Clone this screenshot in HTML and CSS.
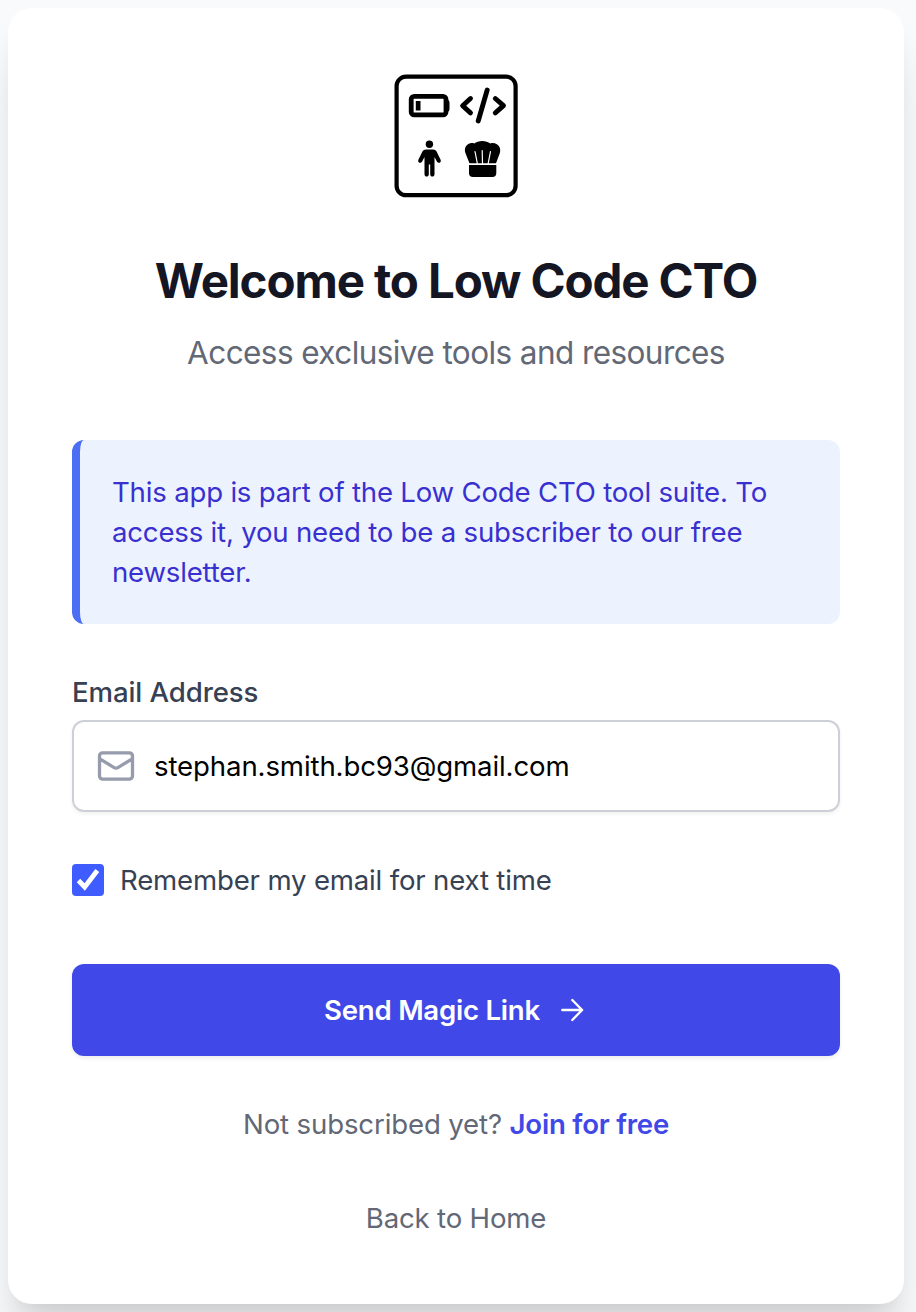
FILE: index.html
```html
<!DOCTYPE html>
<html lang="en">
<head>
<meta charset="utf-8">
<title>Low Code CTO</title>
<link rel="stylesheet" href="styles.css">
</head>
<body>
<main class="card">
  <svg class="logo" viewBox="0 0 128 128" aria-hidden="true">
    <rect x="4.6" y="4.6" width="119" height="118.6" rx="9.5" fill="none" stroke="#000" stroke-width="4.2"/>
    <rect x="19.2" y="24.3" width="34.8" height="18.6" rx="3" fill="none" stroke="#000" stroke-width="4.8"/>
    <path d="M23.8 29h4.7v9.4h-4.7zM55.5 27.7q2 .5 2 2.5v7q0 2-2 2.5z"/>
    <path d="M78.5 26.5 70.6 33.700 78.500 40.900M103.300 26.500l8.200 7.200-8.200 7.200M95.200 18 86.200 49" fill="none" stroke="#000" stroke-width="4.900" stroke-linecap="round" stroke-linejoin="round"/>
    <circle cx="37.4" cy="72.2" r="3.7"/>
    <path d="M34 77.5h7c1.7 0 2.8.7 3.6 2l4 8.2c1.2 2.6-2.2 4.4-3.6 2L42.5 85v17.2c0 3.2-4.3 3.2-4.3 0V92.4h-1.4v9.8c0 3.2-4.3 3.2-4.3 0V85L30 89.7c-1.4 2.4-4.8.6-3.6-2l4-8.2c.8-1.3 1.9-2 3.6-2z"/>
    <path d="M77.5 91.3 73.6 81.5C71 75.5 76 69.5 82.3 71.500 86 68 94.500 68 98.300 71.500 105 69.500 110 75.500 107.700 81.500L104 91.300z"/>
    <path d="m83 79.500 2.300 11.800M90.200 78.500l.3 12.800M98.500 79.500l-2.300 11.800" fill="none" stroke="#fff" stroke-width="1.2" stroke-linecap="round"/>
    <path d="M77 93h27.300v8q0 3.900-4 3.900H81q-4 0-4-3.900z"/>
  </svg>
  <h1 class="title">Welcome to Low Code CTO</h1>
  <p class="subtitle">Access exclusive tools and resources</p>
  <div class="notice">This app is part of the Low Code CTO tool suite. To<br>access it, you need to be a subscriber to our free<br>newsletter.</div>
  <div class="label">Email Address</div>
  <div class="field">
    <svg class="mail" viewBox="0 0 24 24" aria-hidden="true"><path d="M3 8l8 4.900q1 .6 2 0L21 8M4.700 19.200h14.600a1.700 1.700 0 001.700-1.700V6.500a1.700 1.700 0 00-1.700-1.700H4.700a1.700 1.700 0 00-1.700 1.700v11a1.700 1.700 0 001.700 1.700z"/></svg>
    <span class="email">stephan.smith.bc93@gmail.com</span>
  </div>
  <div class="remember">
    <span class="checkbox"><svg viewBox="0 0 32 32" aria-hidden="true"><path d="m6.500 16.500 6.200 6.500L25.300 6.500"/></svg></span>
    <span class="remember-text">Remember my email for next time</span>
  </div>
  <div class="button">
    <span class="button-text">Send Magic Link</span>
    <svg class="arrow" viewBox="0 0 24 24" aria-hidden="true"><path d="M2.300 12h19.800M12.300 2l9.800 10-9.800 10"/></svg>
  </div>
  <p class="join">Not subscribed yet? <a class="join-link">Join for free</a></p>
  <p class="back">Back to Home</p>
</main>
</body>
</html>
```
FILE: styles.css
```css
* { box-sizing: border-box; }
body {
  margin: 0;
  padding: 8px 12px 8px 8px;
  height: 1312px;
  overflow: hidden;
  background: #f9fafb;
  font-family: Inter, "Liberation Sans", sans-serif;
  font-size: 27.6px;
  line-height: 40px;
  letter-spacing: -.18px;
  color: #364153;
}
.card {
  display: flex;
  flex-direction: column;
  height: 1296px;
  padding: 64px;
  border-radius: 24px;
  background: #fff;
  box-shadow: 0 40px 50px -6px rgba(0,0,0,.12), 0 16px 20px -12px rgba(0,0,0,.1);
}
p, h1 { margin: 0; text-align: center; white-space: nowrap; }
.logo { width: 128px; height: 128px; align-self: center; }
.title { margin-top: 49px; font-size: 47.5px; line-height: 64px; font-weight: 700; letter-spacing: -1.12px; color: #151623; }
.subtitle { margin-top: 16px; font-size: 31.5px; line-height: 48px; letter-spacing: -.58px; color: #626875; }
.notice {
  margin-top: 63px;
  height: 184px;
  padding: 32px 0 0 32px;
  border-left: 8px solid #4c6ef5;
  border-radius: 12px;
  background: #ecf3ff;
  color: #3a30d0;
  letter-spacing: -.2px;
  white-space: nowrap;
}
.label { margin-top: 48px; font-weight: 500; letter-spacing: -.1px; }
.field {
  display: flex;
  align-items: center;
  margin-top: 8px;
  height: 92px;
  padding-left: 20px;
  border: 2px solid #cdd0d6;
  border-radius: 12px;
  box-shadow: 0 2px 4px rgba(0,0,0,.06);
  color: #000;
  letter-spacing: -.12px;
}
.mail { width: 44px; height: 44px; margin-right: 16px; fill: none; stroke: #969cab; stroke-width: 1.8; stroke-linecap: round; stroke-linejoin: round; }
.remember { display: flex; align-items: center; gap: 16px; margin-top: 48px; height: 40px; }
.checkbox { width: 32px; height: 32px; border-radius: 4px; background: #3e5cff; }
.checkbox svg { display: block; width: 32px; height: 32px; fill: none; stroke: #fff; stroke-width: 4.8; }
.button {
  display: flex;
  align-items: center;
  justify-content: center;
  gap: 20px;
  margin-top: 64px;
  height: 92px;
  border-radius: 12px;
  background: #4049e8;
  box-shadow: 0 2px 4px rgba(0,0,0,.08);
  color: #fff;
  font-weight: 600;
  letter-spacing: -.24px;
}
.arrow { width: 24px; height: 24px; margin-right: 4px; fill: none; stroke: #fff; stroke-width: 2.4; stroke-linecap: round; stroke-linejoin: round; }
.join { margin-top: 48px; color: #626875; letter-spacing: -.14px; }
.join-link { font-weight: 600; color: #4049e8; letter-spacing: -.22px; }
.back { margin-top: 54px; color: #626875; }
```
